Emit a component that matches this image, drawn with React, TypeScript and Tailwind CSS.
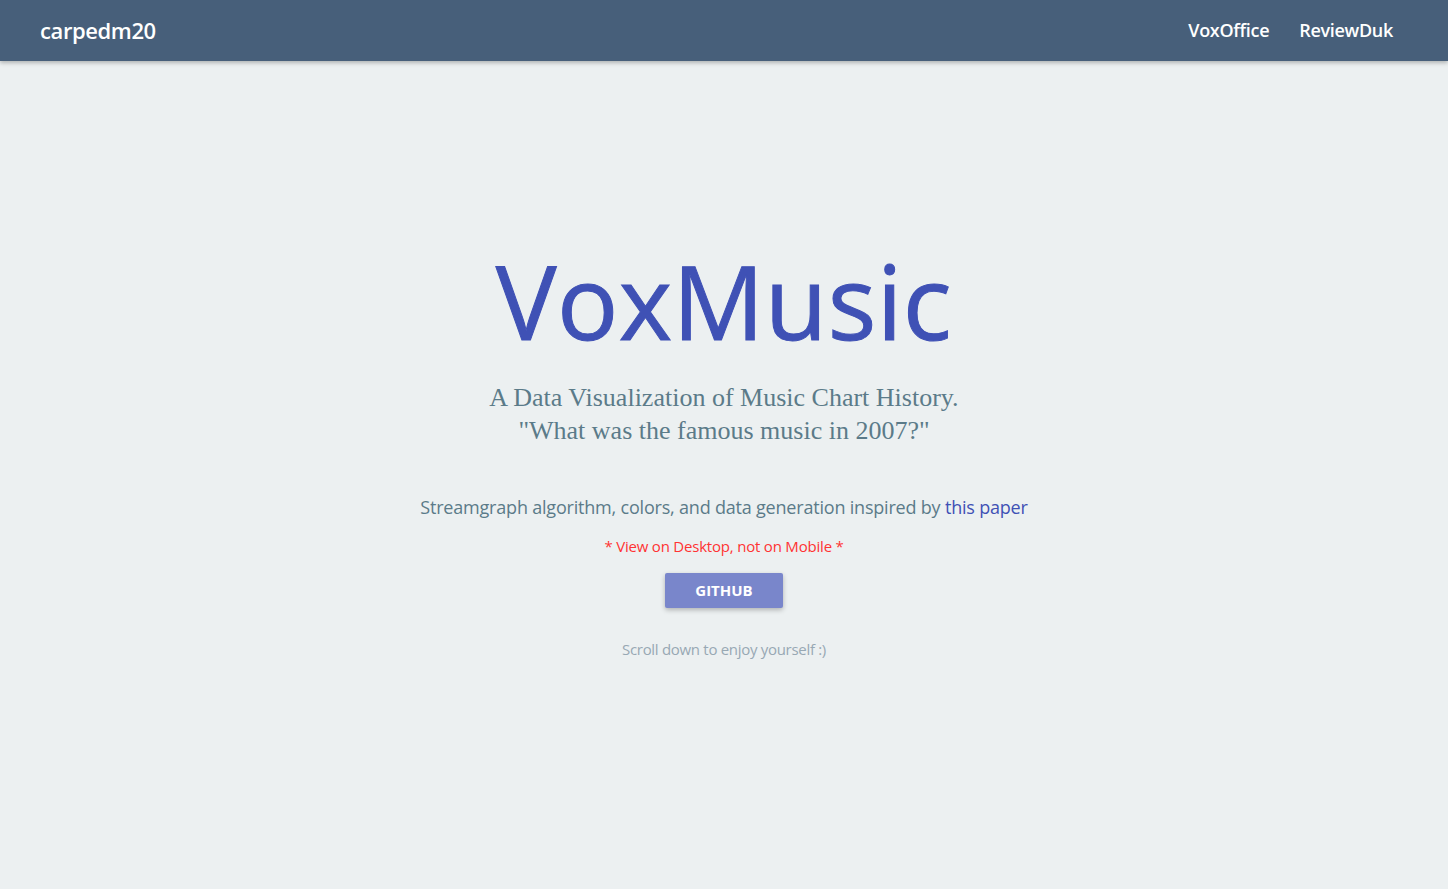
export default function App() {
  return (
    <div className="min-h-[889px] bg-[#ecf0f1] font-['Open_Sans',sans-serif]">
      {/* Nav */}
      <nav className="flex h-[61px] items-center justify-between bg-[#475f7a] pl-10 pr-[55px] shadow-[0_2px_4px_rgba(0,0,0,0.25)]">
        <a className="text-[22px] font-semibold tracking-[-0.4px] text-white">carpedm20</a>
        <div className="flex items-center gap-x-[30px] text-[18px] font-semibold tracking-[-0.3px] text-white">
          <a>VoxOffice</a>
          <a>ReviewDuk</a>
        </div>
      </nav>

      {/* Hero */}
      <div className="flex flex-col items-center pt-[170px] text-center">
        <h1 className="text-[102px] leading-[140px] font-normal tracking-[0.4px] text-[#3f51b5] [-webkit-text-stroke:1px_#3f51b5]">
          VoxMusic
        </h1>
        <p className="mt-[10px] font-['Liberation_Serif',serif] text-[26px] leading-[33px] text-[#5b7b89]">
          A Data Visualization of Music Chart History.
          <br />
          "What was the famous music in 2007?"
        </p>
        <p className="mt-[47px] text-[18px] tracking-[-0.2px] text-[#5b7b89]">
          Streamgraph algorithm, colors, and data generation inspired by{' '}
          <a className="text-[#3f51b5]">this paper</a>
        </p>
        <p className="mt-[14px] text-[15px] tracking-[-0.2px] text-[#ff3333]">* View on Desktop, not on Mobile *</p>
        <button className="mt-[15px] h-[35px] w-[118px] rounded-[2px] bg-[#7986cb] text-[15px] font-bold text-white shadow-[0_2px_5px_rgba(0,0,0,0.26)]">
          GITHUB
        </button>
        <p className="mt-[30px] text-[15px] tracking-[-0.3px] text-[#98a8b4]">Scroll down to enjoy yourself :)</p>
      </div>
    </div>
  );
}
